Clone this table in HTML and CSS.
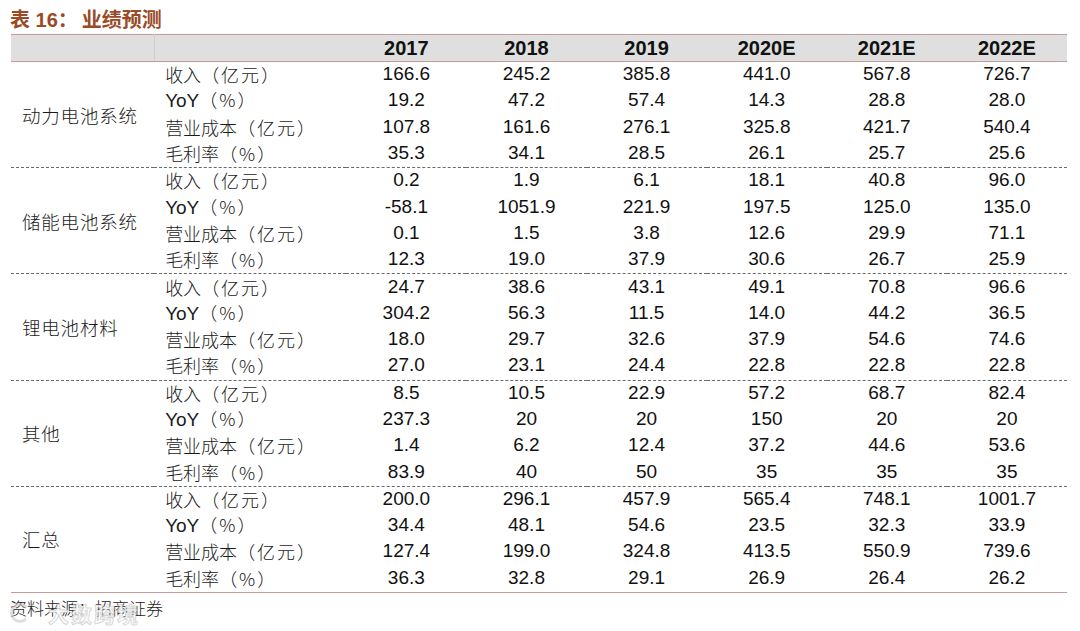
FILE: index.html
```html
<!DOCTYPE html>
<html lang="zh">
<head>
<meta charset="utf-8">
<link rel="stylesheet" href="styles.css">
</head>
<body>
<div class="page">
  <div class="title">表 16：<span class="title-cn">业绩预测</span></div>
  <table class="fc">
    <colgroup>
      <col class="c-seg"><col class="c-item">
      <col class="c-num"><col class="c-num"><col class="c-num"><col class="c-num"><col class="c-num"><col class="c-num">
    </colgroup>
    <thead>
      <tr>
        <th class="h-seg"></th><th></th>
        <th>2017</th><th>2018</th><th>2019</th><th>2020E</th><th>2021E</th><th>2022E</th>
      </tr>
    </thead>
    <tbody>
      <tr><td class="seg" rowspan="4">动力电池系统</td><td class="item">收入<span class="u">（亿元）</span></td><td>166.6</td><td>245.2</td><td>385.8</td><td>441.0</td><td>567.8</td><td>726.7</td></tr>
      <tr><td class="item"><span class="lat">YoY</span><span class="u">（%）</span></td><td>19.2</td><td>47.2</td><td>57.4</td><td>14.3</td><td>28.8</td><td>28.0</td></tr>
      <tr><td class="item">营业成本<span class="u">（亿元）</span></td><td>107.8</td><td>161.6</td><td>276.1</td><td>325.8</td><td>421.7</td><td>540.4</td></tr>
      <tr><td class="item">毛利率<span class="u">（%）</span></td><td>35.3</td><td>34.1</td><td>28.5</td><td>26.1</td><td>25.7</td><td>25.6</td></tr>
    </tbody>
    <tbody>
      <tr><td class="seg" rowspan="4">储能电池系统</td><td class="item">收入<span class="u">（亿元）</span></td><td>0.2</td><td>1.9</td><td>6.1</td><td>18.1</td><td>40.8</td><td>96.0</td></tr>
      <tr><td class="item"><span class="lat">YoY</span><span class="u">（%）</span></td><td>-58.1</td><td>1051.9</td><td>221.9</td><td>197.5</td><td>125.0</td><td>135.0</td></tr>
      <tr><td class="item">营业成本<span class="u">（亿元）</span></td><td>0.1</td><td>1.5</td><td>3.8</td><td>12.6</td><td>29.9</td><td>71.1</td></tr>
      <tr><td class="item">毛利率<span class="u">（%）</span></td><td>12.3</td><td>19.0</td><td>37.9</td><td>30.6</td><td>26.7</td><td>25.9</td></tr>
    </tbody>
    <tbody>
      <tr><td class="seg" rowspan="4">锂电池材料</td><td class="item">收入<span class="u">（亿元）</span></td><td>24.7</td><td>38.6</td><td>43.1</td><td>49.1</td><td>70.8</td><td>96.6</td></tr>
      <tr><td class="item"><span class="lat">YoY</span><span class="u">（%）</span></td><td>304.2</td><td>56.3</td><td>11.5</td><td>14.0</td><td>44.2</td><td>36.5</td></tr>
      <tr><td class="item">营业成本<span class="u">（亿元）</span></td><td>18.0</td><td>29.7</td><td>32.6</td><td>37.9</td><td>54.6</td><td>74.6</td></tr>
      <tr><td class="item">毛利率<span class="u">（%）</span></td><td>27.0</td><td>23.1</td><td>24.4</td><td>22.8</td><td>22.8</td><td>22.8</td></tr>
    </tbody>
    <tbody>
      <tr><td class="seg" rowspan="4">其他</td><td class="item">收入<span class="u">（亿元）</span></td><td>8.5</td><td>10.5</td><td>22.9</td><td>57.2</td><td>68.7</td><td>82.4</td></tr>
      <tr><td class="item"><span class="lat">YoY</span><span class="u">（%）</span></td><td>237.3</td><td>20</td><td>20</td><td>150</td><td>20</td><td>20</td></tr>
      <tr><td class="item">营业成本<span class="u">（亿元）</span></td><td>1.4</td><td>6.2</td><td>12.4</td><td>37.2</td><td>44.6</td><td>53.6</td></tr>
      <tr><td class="item">毛利率<span class="u">（%）</span></td><td>83.9</td><td>40</td><td>50</td><td>35</td><td>35</td><td>35</td></tr>
    </tbody>
    <tbody class="last">
      <tr><td class="seg" rowspan="4">汇总</td><td class="item">收入<span class="u">（亿元）</span></td><td>200.0</td><td>296.1</td><td>457.9</td><td>565.4</td><td>748.1</td><td>1001.7</td></tr>
      <tr><td class="item"><span class="lat">YoY</span><span class="u">（%）</span></td><td>34.4</td><td>48.1</td><td>54.6</td><td>23.5</td><td>32.3</td><td>33.9</td></tr>
      <tr><td class="item">营业成本<span class="u">（亿元）</span></td><td>127.4</td><td>199.0</td><td>324.8</td><td>413.5</td><td>550.9</td><td>739.6</td></tr>
      <tr><td class="item">毛利率<span class="u">（%）</span></td><td>36.3</td><td>32.8</td><td>29.1</td><td>26.9</td><td>26.4</td><td>26.2</td></tr>
    </tbody>
  </table>
  <div class="source">资料来源：招商证券
    <div class="watermark"><span class="wm-logo"></span>大数跨境</div>
  </div>
</div>
</body>
</html>
```

FILE: styles.css
```css
html, body {
  margin: 0;
  padding: 0;
  background: #ffffff;
}

.page {
  width: 1080px;
  height: 631px;
  overflow: hidden;
  font-family: "Liberation Sans", "Noto Sans CJK SC", sans-serif;
  color: #111111;
}

.title {
  height: 34px;
  box-sizing: border-box;
  padding: 8px 0 0 10px;
  font-family: "Liberation Sans", "Noto Sans CJK SC", sans-serif;
  font-weight: bold;
  font-size: 20px;
  line-height: 24px;
  color: #9a4a27;
}

.title-cn {
  margin-left: 4px;
}

.fc {
  margin-left: 11px;
  width: 1056px;
  border-collapse: collapse;
  table-layout: fixed;
}

.c-seg { width: 143px; }
.c-item { width: 192px; }
.c-num { width: 120px; }

.fc thead th {
  height: 26px;
  padding: 0;
  background: #dfdfdf;
  border-top: 1px solid #c99a98;
  border-bottom: 1px solid #c99a98;
  font-size: 20px;
  font-weight: bold;
  text-align: center;
  vertical-align: middle;
  line-height: 26px;
}

.fc thead th.h-seg {
  border-right: 1px solid #cfcfcf;
}

.fc tbody + tbody tr:first-child td {
  border-top: 1px dashed #6a6a6a;
}

.fc tbody.last tr:last-child td,
.fc tbody.last td.seg {
  border-bottom: 1px solid #c99a98;
}

.fc td {
  height: 24.3px;
  padding: 0 0 2px 0;
  font-size: 19px;
  line-height: 20px;
  text-align: center;
  vertical-align: middle;
  white-space: nowrap;
}

.fc td.seg {
  text-align: left;
  padding: 0 0 0 11px;
  font-family: "Noto Sans CJK SC", sans-serif;
  font-weight: 300;
  font-size: 18.5px;
  letter-spacing: 0.8px;
  color: #1a1a1a;
}

.fc td.item {
  text-align: left;
  padding-left: 11px;
  font-family: "Noto Sans CJK SC", sans-serif;
  font-weight: 300;
  font-size: 18px;
  color: #1a1a1a;
}

.u {
  font-family: "Noto Sans CJK TC", "Noto Sans CJK SC", sans-serif;
  letter-spacing: 2px;
}

.lat {
  font-family: "Liberation Sans", sans-serif;
  font-weight: normal;
  font-size: 19px;
}

.source {
  position: relative;
  padding: 3px 0 0 10px;
  font-family: "Noto Sans CJK SC", sans-serif;
  font-weight: 300;
  font-size: 17px;
  line-height: 24px;
  color: #1a1a1a;
}

.watermark {
  position: absolute;
  left: 10px;
  top: 8px;
  display: flex;
  align-items: center;
  gap: 18px;
  font-family: "Noto Sans CJK SC", sans-serif;
  font-weight: bold;
  font-size: 21px;
  line-height: 24px;
  letter-spacing: 2px;
  color: rgba(255, 255, 255, 0.85);
  -webkit-text-stroke: 1px rgba(175, 175, 175, 0.5);
}

.wm-logo {
  width: 14px;
  height: 14px;
  border: 3px solid rgba(200, 200, 200, 0.6);
  border-right-color: transparent;
  border-radius: 50%;
}
```
